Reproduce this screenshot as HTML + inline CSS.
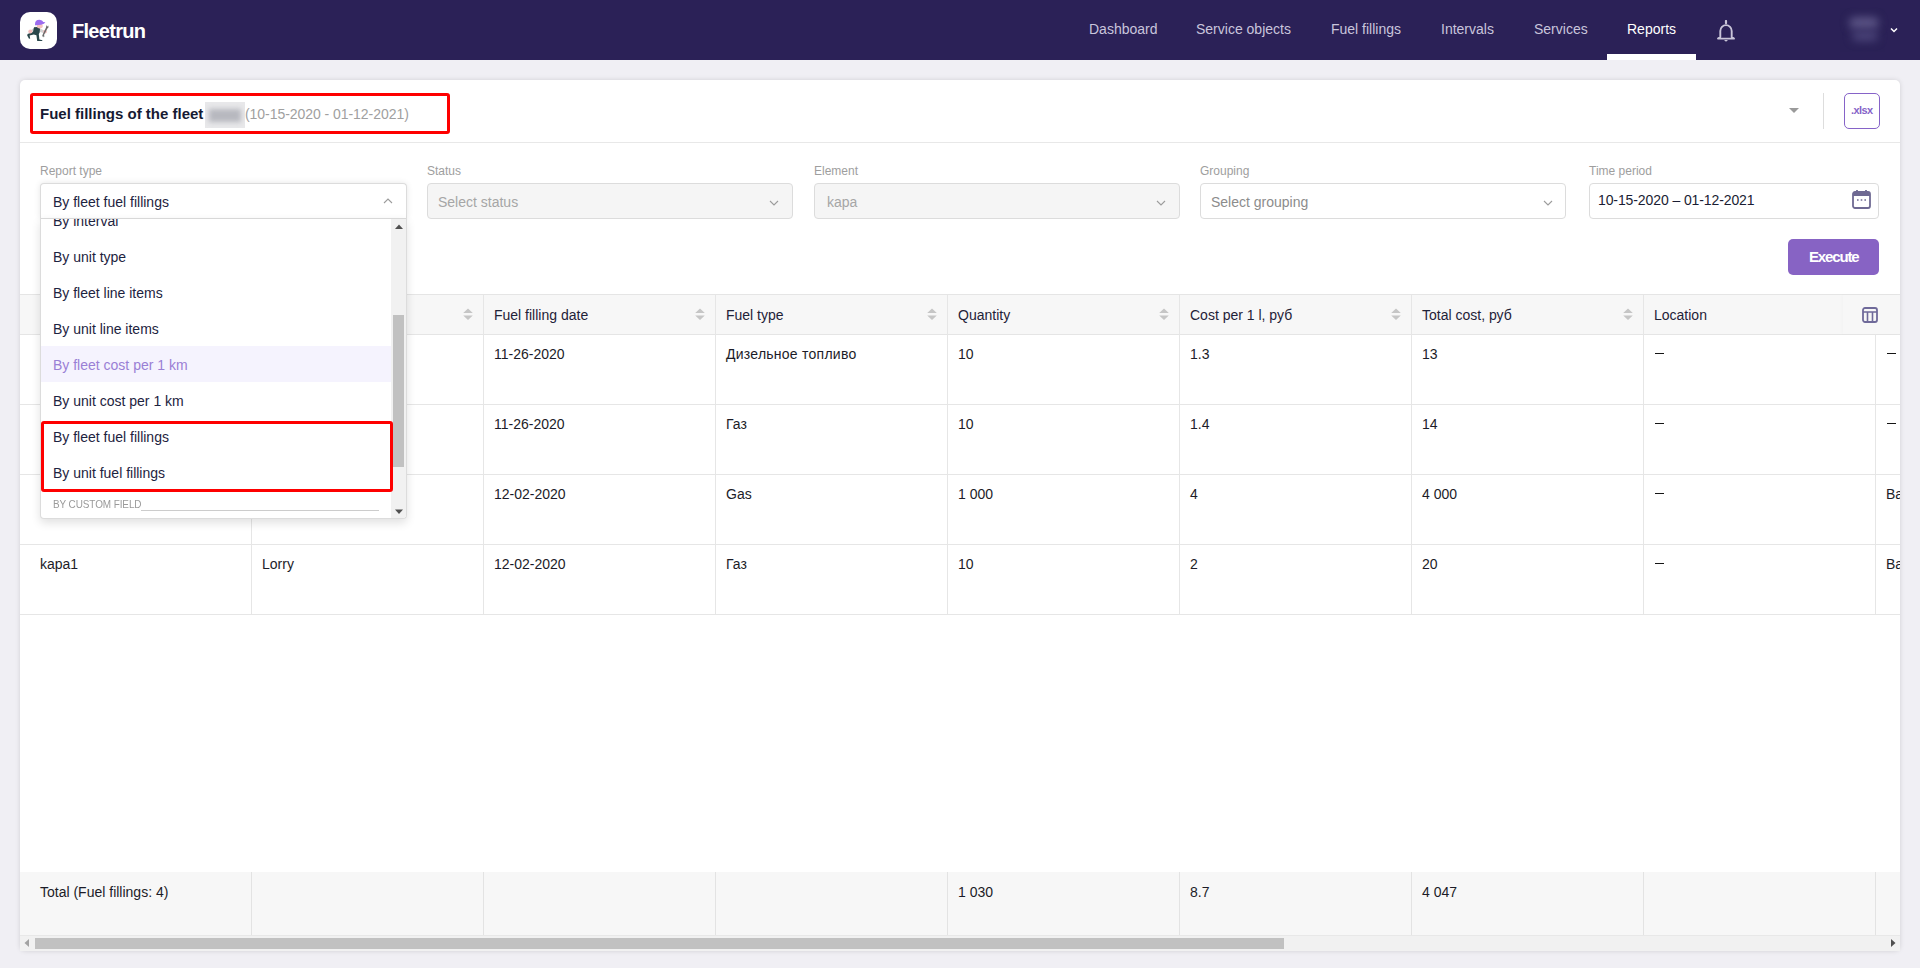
<!DOCTYPE html><html><head><meta charset="utf-8"><style>
*{box-sizing:border-box;margin:0;padding:0}
html,body{width:1920px;height:968px;overflow:hidden;background:#f0eff4;font-family:"Liberation Sans",sans-serif;color:#1f2238}
.a{position:absolute;white-space:nowrap}
.nav{font-size:14px;color:#c9c5dc;line-height:16px}
.lbl{font-size:12px;color:#9e9e9e;line-height:14px}
.sel{height:36px;border:1px solid #dcdcdc;border-radius:4px;background:#fff}
.dis{background:#f5f5f5}
.t14{font-size:14px;line-height:16px}
.ph{color:#a6a6a6}
.dk{color:#1f2238}
.cell{color:#1c1c28}
</style></head><body>
<div class="a" style="left:0;top:0;width:1920px;height:60px;background:#2b2157"></div>
<div class="a" style="left:20px;top:12px;width:37px;height:37px;background:#fff;border-radius:10px"></div>
<svg class="a" style="left:20px;top:12px" width="37" height="37" viewBox="0 0 37 37">
<path d="M10.5 18.5 L15.5 14.8 L18.5 15.5 L24 18.6 L23.2 21 L18.8 19.4 L12.5 20.8z" fill="#d2d2d2"/>
<path d="M14 15.2 L18.6 15 L20 17 L19.6 20.8 L18.8 22 L19.4 27.4 L22.6 28.2 L22 29 L17.2 29 L16.4 23.2 L13.8 22.6 L9.6 23.4 L10.2 26.5 L9 26.8 L7.2 23.4 L7.6 22 L13 20z" fill="#29464a"/>
<circle cx="10.3" cy="19.4" r="2" fill="#f4bcbc"/>
<circle cx="25" cy="19.6" r="1.9" fill="#f4bcbc"/>
<ellipse cx="19.8" cy="14" rx="3" ry="2.3" fill="#f4c2c0"/>
<path d="M15 13.2 Q14.6 7.8 19.5 7.8 Q22.6 7.9 23.3 10.1 L25.4 10.2 Q24.6 12 21 12.8 Q17.5 13.4 15 13.2z" fill="#9c6cf0"/>
<path d="M26.2 12.8 L27 14.8 L28.2 13.6 L28.6 15.2 L27.4 16.6 L24 23 L24.6 24.6 L23.4 24.4 L23.6 25.6 L22.2 24 L22.8 22.2 L26 15.6z" fill="#6a6a6a"/>
</svg>
<div class="a" style="left:72px;top:20px;font-size:20px;line-height:22px;font-weight:bold;color:#fff;letter-spacing:-0.7px">Fleetrun</div>
<div class="a nav" style="left:1089px;top:21px">Dashboard</div>
<div class="a nav" style="left:1196px;top:21px">Service objects</div>
<div class="a nav" style="left:1331px;top:21px">Fuel fillings</div>
<div class="a nav" style="left:1441px;top:21px">Intervals</div>
<div class="a nav" style="left:1534px;top:21px">Services</div>
<div class="a nav" style="left:1627px;top:21px;color:#fff">Reports</div>
<div class="a" style="left:1607px;top:54px;width:89px;height:6px;background:#fff"></div>
<svg class="a" style="left:1716px;top:20px" width="20" height="22" viewBox="0 0 20 22">
<path d="M10 1 v2.2" stroke="#c8c4d8" stroke-width="2.2" stroke-linecap="round"/>
<path d="M4.3 17 V11 a5.7 5.9 0 0 1 11.4 0 V17 L18 18.6 H2z" stroke="#c8c4d8" stroke-width="1.9" fill="none" stroke-linejoin="round"/>
<path d="M8 20 h4 l-2 1.8z" fill="#c8c4d8"/>
</svg>
<div class="a" style="left:1840px;top:8px;width:45px;height:44px;background:#2a2156"></div>
<div class="a" style="left:1849px;top:17px;width:30px;height:12px;border-radius:6px;background:#5a5384;filter:blur(4px)"></div>
<div class="a" style="left:1852px;top:31px;width:26px;height:10px;border-radius:5px;background:#4a4378;filter:blur(4px)"></div>
<svg class="a" style="left:1889px;top:26px" width="10" height="8" viewBox="0 0 10 8"><path d="M2 2.5 l3 3 3-3" stroke="#fff" stroke-width="1.5" fill="none"/></svg>
<div class="a" style="left:20px;top:80px;width:1880px;height:871px;background:#fff;border-radius:5px;box-shadow:0 0 5px rgba(0,0,0,.13)"></div>
<div class="a" style="left:30px;top:93px;width:420px;height:41px;border:3px solid #fe0000;border-radius:3px"></div>
<div class="a" style="left:40px;top:105px;font-size:15px;line-height:18px;font-weight:bold;color:#161a33">Fuel fillings of the fleet</div>
<div class="a" style="left:205px;top:102px;width:40px;height:26px;background:#e8e8ea;overflow:hidden"><div class="a" style="left:4px;top:7px;width:32px;height:13px;background:#b7b8bf;filter:blur(2.5px)"></div></div>
<div class="a" style="left:245px;top:105px;font-size:14px;line-height:18px;color:#a0a0a0;letter-spacing:-0.05px">(10-15-2020 - 01-12-2021)</div>
<svg class="a" style="left:1789px;top:107.7px" width="10" height="6" viewBox="0 0 10 6"><path d="M0 0 h10 l-5 5z" fill="#9a9a9a"/></svg>
<div class="a" style="left:1823px;top:93px;width:1px;height:36px;background:#dddddd"></div>
<div class="a" style="left:1844px;top:93px;width:36px;height:36px;border:1.3px solid #8663c8;border-radius:5px"></div>
<div class="a" style="left:1851px;top:104px;font-size:11px;line-height:13px;font-weight:bold;color:#8663c8;letter-spacing:-0.6px">.xlsx</div>
<div class="a" style="left:20px;top:142px;width:1880px;height:1px;background:#e8e8e8"></div>
<div class="a lbl" style="left:40px;top:164px">Report type</div>
<div class="a lbl" style="left:427px;top:164px">Status</div>
<div class="a lbl" style="left:814px;top:164px">Element</div>
<div class="a lbl" style="left:1200px;top:164px">Grouping</div>
<div class="a lbl" style="left:1589px;top:164px">Time period</div>
<div class="a sel dis" style="left:427px;top:183px;width:366px"></div>
<div class="a t14 ph" style="left:438px;top:194px">Select status</div>
<svg class="a" style="left:769px;top:200px" width="10" height="6" viewBox="0 0 10 6"><path d="M1 1 l4 4 4-4" stroke="#9c9c9c" stroke-width="1.1" fill="none"/></svg>
<div class="a sel dis" style="left:814px;top:183px;width:366px"></div>
<div class="a t14 ph" style="left:827px;top:194px">kapa</div>
<svg class="a" style="left:1156px;top:200px" width="10" height="6" viewBox="0 0 10 6"><path d="M1 1 l4 4 4-4" stroke="#9c9c9c" stroke-width="1.1" fill="none"/></svg>
<div class="a sel" style="left:1200px;top:183px;width:366px"></div>
<div class="a t14" style="left:1211px;top:194px;color:#8c8c8c">Select grouping</div>
<svg class="a" style="left:1543px;top:200px" width="10" height="6" viewBox="0 0 10 6"><path d="M1 1 l4 4 4-4" stroke="#9c9c9c" stroke-width="1.1" fill="none"/></svg>
<div class="a sel" style="left:1589px;top:183px;width:290px"></div>
<div class="a t14 dk" style="left:1598px;top:192px;color:#1a1d33;letter-spacing:-0.1px">10-15-2020 – 01-12-2021</div>
<svg class="a" style="left:1852px;top:189px" width="19" height="20" viewBox="0 0 19 20">
<rect x="1" y="3" width="17" height="16" rx="2" stroke="#6f6a93" stroke-width="1.8" fill="none"/>
<rect x="1" y="3" width="17" height="4" fill="#6f6a93"/>
<path d="M5 1 v3 M14 1 v3" stroke="#6f6a93" stroke-width="1.8"/>
<path d="M5 11 h1.6 M8.7 11 h1.6 M12.4 11 h1.6" stroke="#6f6a93" stroke-width="1.3"/>
</svg>
<div class="a" style="left:1788px;top:239px;width:91px;height:36px;background:#8763c4;border-radius:5px"></div>
<div class="a" style="left:1809px;top:249px;font-size:15px;line-height:16px;font-weight:bold;color:#fff;letter-spacing:-1.15px">Execute</div>
<div class="a" style="left:20px;top:294px;width:1880px;height:41px;background:#f7f7f7;border-top:1px solid #e5e5e5;border-bottom:1px solid #e5e5e5"></div>
<div class="a" style="left:251px;top:295px;width:1px;height:320px;background:#e6e6e6"></div>
<div class="a" style="left:251px;top:872px;width:1px;height:63px;background:#e3e3e3"></div>
<div class="a" style="left:483px;top:295px;width:1px;height:320px;background:#e6e6e6"></div>
<div class="a" style="left:483px;top:872px;width:1px;height:63px;background:#e3e3e3"></div>
<div class="a" style="left:715px;top:295px;width:1px;height:320px;background:#e6e6e6"></div>
<div class="a" style="left:715px;top:872px;width:1px;height:63px;background:#e3e3e3"></div>
<div class="a" style="left:947px;top:295px;width:1px;height:320px;background:#e6e6e6"></div>
<div class="a" style="left:947px;top:872px;width:1px;height:63px;background:#e3e3e3"></div>
<div class="a" style="left:1179px;top:295px;width:1px;height:320px;background:#e6e6e6"></div>
<div class="a" style="left:1179px;top:872px;width:1px;height:63px;background:#e3e3e3"></div>
<div class="a" style="left:1411px;top:295px;width:1px;height:320px;background:#e6e6e6"></div>
<div class="a" style="left:1411px;top:872px;width:1px;height:63px;background:#e3e3e3"></div>
<div class="a" style="left:1643px;top:295px;width:1px;height:320px;background:#e6e6e6"></div>
<div class="a" style="left:1643px;top:872px;width:1px;height:63px;background:#e3e3e3"></div>
<div class="a" style="left:1875px;top:295px;width:1px;height:320px;background:#e6e6e6"></div>
<div class="a" style="left:1875px;top:872px;width:1px;height:63px;background:#e3e3e3"></div>
<div class="a" style="left:20px;top:404px;width:1880px;height:1px;background:#e6e6e6"></div>
<div class="a" style="left:20px;top:474px;width:1880px;height:1px;background:#e6e6e6"></div>
<div class="a" style="left:20px;top:544px;width:1880px;height:1px;background:#e6e6e6"></div>
<div class="a" style="left:20px;top:614px;width:1880px;height:1px;background:#e6e6e6"></div>
<div class="a t14" style="left:40px;top:307px;color:#1f2238">Unit</div>
<svg class="a" style="left:231px;top:308px" width="10" height="13" viewBox="0 0 10 13"><path d="M5 0.5 l4.8 4.5 h-9.6z M5 12 l4.8-4.5 h-9.6z" fill="#c6c6c6"/></svg>
<div class="a t14" style="left:262px;top:307px;color:#1f2238">Unit type</div>
<svg class="a" style="left:463px;top:308px" width="10" height="13" viewBox="0 0 10 13"><path d="M5 0.5 l4.8 4.5 h-9.6z M5 12 l4.8-4.5 h-9.6z" fill="#c6c6c6"/></svg>
<div class="a t14" style="left:494px;top:307px;color:#1f2238">Fuel filling date</div>
<svg class="a" style="left:695px;top:308px" width="10" height="13" viewBox="0 0 10 13"><path d="M5 0.5 l4.8 4.5 h-9.6z M5 12 l4.8-4.5 h-9.6z" fill="#c6c6c6"/></svg>
<div class="a t14" style="left:726px;top:307px;color:#1f2238">Fuel type</div>
<svg class="a" style="left:927px;top:308px" width="10" height="13" viewBox="0 0 10 13"><path d="M5 0.5 l4.8 4.5 h-9.6z M5 12 l4.8-4.5 h-9.6z" fill="#c6c6c6"/></svg>
<div class="a t14" style="left:958px;top:307px;color:#1f2238">Quantity</div>
<svg class="a" style="left:1159px;top:308px" width="10" height="13" viewBox="0 0 10 13"><path d="M5 0.5 l4.8 4.5 h-9.6z M5 12 l4.8-4.5 h-9.6z" fill="#c6c6c6"/></svg>
<div class="a t14" style="left:1190px;top:307px;color:#1f2238">Cost per 1 l, руб</div>
<svg class="a" style="left:1391px;top:308px" width="10" height="13" viewBox="0 0 10 13"><path d="M5 0.5 l4.8 4.5 h-9.6z M5 12 l4.8-4.5 h-9.6z" fill="#c6c6c6"/></svg>
<div class="a t14" style="left:1422px;top:307px;color:#1f2238">Total cost, руб</div>
<svg class="a" style="left:1623px;top:308px" width="10" height="13" viewBox="0 0 10 13"><path d="M5 0.5 l4.8 4.5 h-9.6z M5 12 l4.8-4.5 h-9.6z" fill="#c6c6c6"/></svg>
<div class="a t14" style="left:1654px;top:307px;color:#1f2238">Location</div>
<div class="a t14 cell" style="left:40px;top:346px">kapa1</div>
<div class="a t14 cell" style="left:262px;top:346px">Lorry</div>
<div class="a t14 cell" style="left:494px;top:346px">11-26-2020</div>
<div class="a t14 cell" style="left:726px;top:346px;letter-spacing:0.25px">Дизельное топливо</div>
<div class="a t14 cell" style="left:958px;top:346px">10</div>
<div class="a t14 cell" style="left:1190px;top:346px">1.3</div>
<div class="a t14 cell" style="left:1422px;top:346px">13</div>
<div class="a" style="left:1655px;top:353px;width:9px;height:1.3px;background:#151515"></div>
<div class="a" style="left:1887px;top:353px;width:9px;height:1.3px;background:#151515"></div>
<div class="a t14 cell" style="left:40px;top:416px">kapa1</div>
<div class="a t14 cell" style="left:262px;top:416px">Lorry</div>
<div class="a t14 cell" style="left:494px;top:416px">11-26-2020</div>
<div class="a t14 cell" style="left:726px;top:416px">Газ</div>
<div class="a t14 cell" style="left:958px;top:416px">10</div>
<div class="a t14 cell" style="left:1190px;top:416px">1.4</div>
<div class="a t14 cell" style="left:1422px;top:416px">14</div>
<div class="a" style="left:1655px;top:423px;width:9px;height:1.3px;background:#151515"></div>
<div class="a" style="left:1887px;top:423px;width:9px;height:1.3px;background:#151515"></div>
<div class="a t14 cell" style="left:40px;top:486px">kapa1</div>
<div class="a t14 cell" style="left:262px;top:486px">Lorry</div>
<div class="a t14 cell" style="left:494px;top:486px">12-02-2020</div>
<div class="a t14 cell" style="left:726px;top:486px">Gas</div>
<div class="a t14 cell" style="left:958px;top:486px">1 000</div>
<div class="a t14 cell" style="left:1190px;top:486px">4</div>
<div class="a t14 cell" style="left:1422px;top:486px">4 000</div>
<div class="a" style="left:1655px;top:493px;width:9px;height:1.3px;background:#151515"></div>
<div class="a t14 cell" style="left:1886px;top:486px;width:14px;overflow:hidden">Bakhrushina</div>
<div class="a t14 cell" style="left:40px;top:556px">kapa1</div>
<div class="a t14 cell" style="left:262px;top:556px">Lorry</div>
<div class="a t14 cell" style="left:494px;top:556px">12-02-2020</div>
<div class="a t14 cell" style="left:726px;top:556px">Газ</div>
<div class="a t14 cell" style="left:958px;top:556px">10</div>
<div class="a t14 cell" style="left:1190px;top:556px">2</div>
<div class="a t14 cell" style="left:1422px;top:556px">20</div>
<div class="a" style="left:1655px;top:563px;width:9px;height:1.3px;background:#151515"></div>
<div class="a t14 cell" style="left:1886px;top:556px;width:14px;overflow:hidden">Bakhrushina</div>
<div class="a" style="left:1843px;top:295px;width:57px;height:39px;background:#f7f7f7;box-shadow:-2px 0 3px rgba(0,0,0,0.015)"></div>
<svg class="a" style="left:1862px;top:307px" width="16" height="16" viewBox="0 0 16 16">
<rect x="1" y="1" width="14" height="14" rx="2" stroke="#6f6a9a" stroke-width="1.8" fill="none"/>
<path d="M1 5 h14 M5.5 5 v10 M10.5 5 v10" stroke="#6f6a9a" stroke-width="1.6"/>
</svg>
<div class="a" style="left:20px;top:872px;width:1880px;height:63px;background:#f7f7f7"></div>
<div class="a" style="left:251px;top:872px;width:1px;height:63px;background:#e3e3e3"></div>
<div class="a" style="left:483px;top:872px;width:1px;height:63px;background:#e3e3e3"></div>
<div class="a" style="left:715px;top:872px;width:1px;height:63px;background:#e3e3e3"></div>
<div class="a" style="left:947px;top:872px;width:1px;height:63px;background:#e3e3e3"></div>
<div class="a" style="left:1179px;top:872px;width:1px;height:63px;background:#e3e3e3"></div>
<div class="a" style="left:1411px;top:872px;width:1px;height:63px;background:#e3e3e3"></div>
<div class="a" style="left:1643px;top:872px;width:1px;height:63px;background:#e3e3e3"></div>
<div class="a" style="left:1875px;top:872px;width:1px;height:63px;background:#e3e3e3"></div>
<div class="a t14 cell" style="left:40px;top:884px">Total (Fuel fillings: 4)</div>
<div class="a t14 cell" style="left:958px;top:884px">1 030</div>
<div class="a t14 cell" style="left:1190px;top:884px">8.7</div>
<div class="a t14 cell" style="left:1422px;top:884px">4 047</div>
<div class="a" style="left:20px;top:935px;width:1880px;height:16px;background:#f1f1f1;border-top:1px solid #e8e8e8"></div>
<div class="a" style="left:35px;top:938px;width:1249px;height:11px;background:#c1c1c1"></div>
<svg class="a" style="left:24px;top:939px" width="6" height="8" viewBox="0 0 6 8"><path d="M5 0 v8 l-4.5-4z" fill="#a3a3a3"/></svg>
<svg class="a" style="left:1890px;top:939px" width="6" height="8" viewBox="0 0 6 8"><path d="M1 0 v8 l4.5-4z" fill="#505050"/></svg>
<div class="a" style="left:40px;top:183px;width:367px;height:36px;background:#fff;border:1px solid #dcdcdc;border-bottom:none;border-radius:4px 4px 0 0;box-shadow:0 0 6px rgba(0,0,0,0.10)"></div>
<div class="a" style="left:40px;top:218px;width:367px;height:301px;background:#fff;border:1px solid #dcdcdc;border-top:1px solid #d8d8d8;border-radius:0 0 4px 4px;box-shadow:0 4px 10px rgba(0,0,0,0.12);overflow:hidden">
<div class="a t14" style="left:12px;top:-6px;color:#1d2340">By interval</div>
<div class="a t14" style="left:12px;top:30px;color:#1d2340">By unit type</div>
<div class="a t14" style="left:12px;top:66px;color:#1d2340">By fleet line items</div>
<div class="a t14" style="left:12px;top:102px;color:#1d2340">By unit line items</div>
<div class="a" style="left:0;top:127px;width:350px;height:36px;background:#f5f3fe"></div>
<div class="a t14" style="left:12px;top:138px;color:#9a7fd5">By fleet cost per 1 km</div>
<div class="a t14" style="left:12px;top:174px;color:#1d2340">By unit cost per 1 km</div>
<div class="a t14" style="left:12px;top:210px;color:#1d2340">By fleet fuel fillings</div>
<div class="a t14" style="left:12px;top:246px;color:#1d2340">By unit fuel fillings</div>
<div class="a" style="left:12px;top:279px;font-size:11px;line-height:13px;color:#9a9a9a;letter-spacing:-0.1px;transform:scaleX(0.905);transform-origin:0 0">BY CUSTOM FIELD</div>
<div class="a" style="left:100px;top:291px;width:238px;height:1px;background:#cccccc"></div>
<div class="a" style="left:350px;top:0;width:16px;height:300px;background:#f1f1f1"></div>
<div class="a" style="left:352px;top:96px;width:11px;height:152px;background:#c1c1c1"></div>
<svg class="a" style="left:354px;top:5px" width="8" height="6" viewBox="0 0 8 6"><path d="M0 5 h8 l-4-4.5z" fill="#505050"/></svg>
<svg class="a" style="left:354px;top:290px" width="8" height="6" viewBox="0 0 8 6"><path d="M0 0.5 h8 l-4 4.5z" fill="#505050"/></svg>
</div>
<div class="a t14" style="left:53px;top:194px;color:#1d2340">By fleet fuel fillings</div>
<svg class="a" style="left:383px;top:198px" width="10" height="6" viewBox="0 0 10 6"><path d="M1 5 l4-4 4 4" stroke="#9c9c9c" stroke-width="1.1" fill="none"/></svg>
<div class="a" style="left:41px;top:421px;width:352px;height:71px;border:3px solid #fe0000;border-radius:3px"></div>
</body></html>
